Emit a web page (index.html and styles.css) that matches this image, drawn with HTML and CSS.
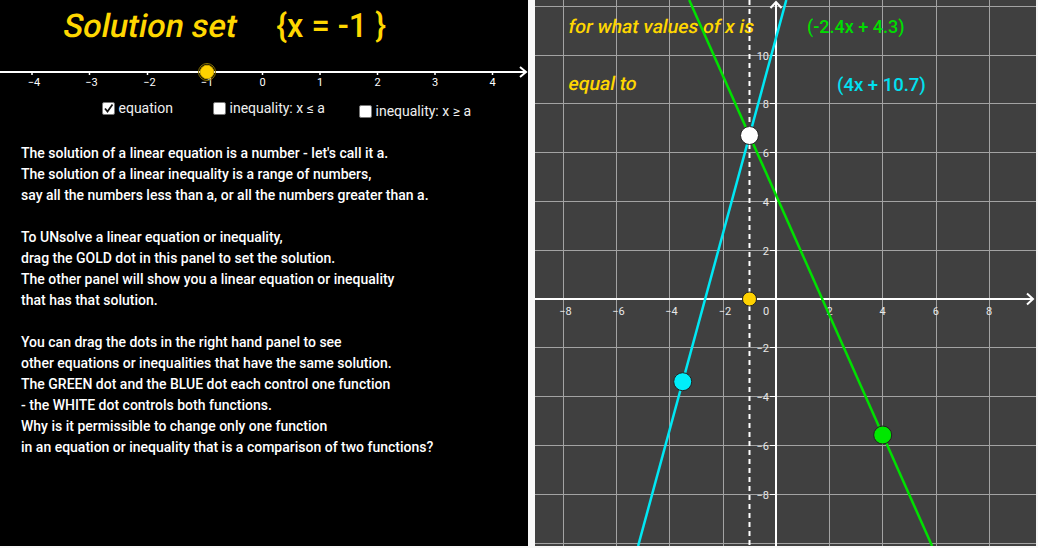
FILE: index.html
```html
<!DOCTYPE html>
<html>
<head>
<meta charset="utf-8">
<link rel="stylesheet" href="styles.css">
</head>
<body>
<div class="app">
  <section class="left">
    <h1 class="title"><span class="title-main">Solution set</span><span class="title-set">{x = -1 }</span></h1>
    <svg class="numline" width="528" height="30" viewBox="0 0 528 30">
      <line x1="0" y1="12" x2="525" y2="12" stroke="#fff" stroke-width="2"/>
      <polyline points="520,7 526,12 520,17" fill="none" stroke="#fff" stroke-width="2"/>
      <g stroke="#fff" stroke-width="1.5">
        <line x1="32" y1="12" x2="32" y2="15"/>
        <line x1="89.5" y1="12" x2="89.5" y2="15"/>
        <line x1="147.5" y1="12" x2="147.5" y2="15"/>
        <line x1="205" y1="12" x2="205" y2="15"/>
        <line x1="262.5" y1="12" x2="262.5" y2="15"/>
        <line x1="320" y1="12" x2="320" y2="15"/>
        <line x1="377.5" y1="12" x2="377.5" y2="15"/>
        <line x1="435" y1="12" x2="435" y2="15"/>
        <line x1="492.5" y1="12" x2="492.5" y2="15"/>
      </g>
      <g class="nl-labels" text-anchor="middle">
        <text x="34" y="26">−4</text>
        <text x="91.5" y="26">−3</text>
        <text x="149.5" y="26">−2</text>
        <text x="207" y="26">−1</text>
        <text x="262.5" y="26">0</text>
        <text x="320" y="26">1</text>
        <text x="377.5" y="26">2</text>
        <text x="435" y="26">3</text>
        <text x="492.5" y="26">4</text>
      </g>
      <circle cx="207" cy="12" r="8.5" fill="none" stroke="#8a7400" stroke-width="1"/>
      <circle cx="207" cy="12" r="6.8" fill="#ffd200" stroke="#c9a400" stroke-width="1"/>
    </svg>
    <div class="checks">
      <label class="check c1"><span class="box"><svg width="11" height="11" viewBox="0 0 11 11"><polyline points="2,5.5 4.5,8.5 9.5,1.5" fill="none" stroke="#111" stroke-width="1.8"/></svg></span><span class="check-text">equation</span></label>
      <label class="check c2"><span class="box"></span><span class="check-text">inequality: x ≤ a</span></label>
      <label class="check c3"><span class="box"></span><span class="check-text">inequality: x ≥ a</span></label>
    </div>
    <div class="explain">
      <p>The solution of a linear equation is a number - let's call it a.<br>The solution of a linear inequality is a range of numbers,<br>say all the numbers less than a, or all the numbers greater than a.</p>
      <p>To UNsolve a linear equation or inequality,<br>drag the GOLD dot in this panel to set the solution.<br>The other panel will show you a linear equation or inequality<br>that has that solution.</p>
      <p>You can drag the dots in the right hand panel to see<br>other equations or inequalities that have the same solution.<br>The GREEN dot and the BLUE dot each control one function<br>- the WHITE dot controls both functions.<br>Why is it permissible to change only one function<br>in an equation or inequality that is a comparison of two functions?</p>
    </div>
  </section>
  <div class="divider"></div>
  <section class="right">
    <svg class="graph" width="501" height="546" viewBox="-1 0 501 546">
      <g stroke="#a3a3a3" stroke-width="1">
        <line x1="27.5" y1="0" x2="27.5" y2="546"/>
        <line x1="80.5" y1="0" x2="80.5" y2="546"/>
        <line x1="133.5" y1="0" x2="133.5" y2="546"/>
        <line x1="187.5" y1="0" x2="187.5" y2="546"/>
        <line x1="293.5" y1="0" x2="293.5" y2="546"/>
        <line x1="346.5" y1="0" x2="346.5" y2="546"/>
        <line x1="400.5" y1="0" x2="400.5" y2="546"/>
        <line x1="453.5" y1="0" x2="453.5" y2="546"/>
        <line x1="-1" y1="6.5" x2="500" y2="6.5"/>
        <line x1="-1" y1="55.5" x2="500" y2="55.5"/>
        <line x1="-1" y1="103.5" x2="500" y2="103.5"/>
        <line x1="-1" y1="152.5" x2="500" y2="152.5"/>
        <line x1="-1" y1="201.5" x2="500" y2="201.5"/>
        <line x1="-1" y1="250.5" x2="500" y2="250.5"/>
        <line x1="-1" y1="347.5" x2="500" y2="347.5"/>
        <line x1="-1" y1="396.5" x2="500" y2="396.5"/>
        <line x1="-1" y1="445.5" x2="500" y2="445.5"/>
        <line x1="-1" y1="494.5" x2="500" y2="494.5"/>
        <line x1="-1" y1="543.5" x2="500" y2="543.5"/>
      </g>
      <text class="q" x="38" y="33" transform="skewX(-11)">for what values of x is</text>
      <text class="q" x="49" y="90" transform="skewX(-11)">equal to</text>
      <text class="f-green" x="271" y="33">(-2.4x + 4.3)</text>
      <text class="f-cyan" x="301" y="91">(4x + 10.7)</text>
      <g stroke="#fff" stroke-width="2" fill="none">
        <line x1="-1" y1="299" x2="497" y2="299"/>
        <polyline points="491,293.5 497,299 491,304.5"/>
        <line x1="240" y1="546" x2="240" y2="2"/>
        <polyline points="234.5,8 240,2 245.5,8"/>
      </g>
      <g stroke="#fff" stroke-width="1">
        <line x1="234" y1="55.5" x2="240" y2="55.5"/>
        <line x1="234" y1="103.5" x2="240" y2="103.5"/>
        <line x1="234" y1="152.5" x2="240" y2="152.5"/>
        <line x1="234" y1="201.5" x2="240" y2="201.5"/>
        <line x1="234" y1="250.5" x2="240" y2="250.5"/>
        <line x1="234" y1="347.5" x2="240" y2="347.5"/>
        <line x1="234" y1="396.5" x2="240" y2="396.5"/>
        <line x1="234" y1="445.5" x2="240" y2="445.5"/>
        <line x1="234" y1="494.5" x2="240" y2="494.5"/>
      </g>
      <g class="ax-labels" text-anchor="end">
        <text x="233" y="59.5">10</text>
        <text x="233" y="107.5">8</text>
        <text x="233" y="156.5">6</text>
        <text x="233" y="205.5">4</text>
        <text x="233" y="254.5">2</text>
        <text x="233" y="351.5">−2</text>
        <text x="233" y="400.5">−4</text>
        <text x="233" y="449.5">−6</text>
        <text x="233" y="498.5">−8</text>
      </g>
      <g class="ax-labels" text-anchor="middle">
        <text x="29.5" y="314.5">−8</text>
        <text x="82.5" y="314.5">−6</text>
        <text x="135.5" y="314.5">−4</text>
        <text x="189" y="314.5">−2</text>
        <text x="230" y="314.5">0</text>
        <text x="293.5" y="314.5">2</text>
        <text x="346.5" y="314.5">4</text>
        <text x="399.8" y="314.5">6</text>
        <text x="453" y="314.5">8</text>
      </g>
      <line x1="213.5" y1="0" x2="213.5" y2="546" stroke="#fff" stroke-width="2" stroke-dasharray="5 4"/>
      <line x1="250.3" y1="0" x2="102.1" y2="546" stroke="#00e8f4" stroke-width="2.5"/>
      <line x1="153.2" y1="0" x2="396.1" y2="546" stroke="#00e000" stroke-width="2.5"/>
      <circle cx="213.5" cy="299" r="7" fill="#ffd200" stroke="#222" stroke-width="1"/>
      <circle cx="213.5" cy="135.5" r="9" fill="#fff" stroke="#222" stroke-width="1"/>
      <circle cx="146.7" cy="381.7" r="9" fill="#00eefa" stroke="#222" stroke-width="1"/>
      <circle cx="346.7" cy="435" r="9" fill="#00e800" stroke="#222" stroke-width="1"/>
    </svg>
  </section>
</div>
</body>
</html>
```
FILE: styles.css
```css
html, body {
  margin: 0;
  padding: 0;
}
body {
  background: #f8f8f8;
  font-family: Roboto, "Liberation Sans", sans-serif;
}
.app {
  display: flex;
  align-items: flex-start;
}
.left {
  width: 528px;
  height: 546px;
  background: #000;
  color: #fff;
  display: flex;
  flex-direction: column;
}
.divider {
  width: 7px;
  height: 548px;
}
.right {
  width: 501px;
  height: 546px;
  background: #404040;
}
.graph {
  display: block;
}
.title {
  margin: 0;
  padding: 6px 0 0 64px;
  height: 40px;
  line-height: 40px;
  font-size: 32.5px;
  color: #ffd700;
  font-weight: 500;
  white-space: nowrap;
  display: flex;
}
.title-main {
  display: inline-block;
  transform: skewX(-11deg);
}
.title-set {
  display: inline-block;
  margin-left: 39px;
}
.numline {
  display: block;
  margin-top: 14px;
}
.nl-labels text {
  font-family: Roboto, "Liberation Sans", sans-serif;
  font-size: 11px;
  fill: #fff;
}
.checks {
  display: flex;
  align-items: flex-start;
  height: 16px;
  margin-top: 10px;
  color: #f0f0f0;
  font-size: 14px;
}
.check {
  display: flex;
  align-items: center;
  gap: 4px;
  height: 16px;
}
.c1 { margin-left: 101.5px; width: 111px; }
.c2 { width: 146px; }
.c3 { margin-top: 3px; }
.box {
  width: 13px;
  height: 13px;
  flex: none;
  box-sizing: border-box;
  background: #fff;
  border: 1px solid #777;
  border-radius: 2px;
  display: flex;
  align-items: center;
  justify-content: center;
}
.check-text {
  line-height: 16px;
  white-space: nowrap;
}
.explain {
  margin-top: 27px;
  padding-left: 21px;
  font-size: 14px;
  font-weight: 500;
  line-height: 21px;
  color: #fff;
}
.explain p {
  margin: 0 0 21px 0;
  white-space: nowrap;
}
.q {
  font-family: Roboto, "Liberation Sans", sans-serif;
  font-weight: 500;
  font-size: 19px;
  fill: #ffd700;
}
.f-green {
  font-family: Roboto, "Liberation Sans", sans-serif;
  font-weight: 500;
  font-size: 18px;
  fill: #00dd00;
}
.f-cyan {
  font-family: Roboto, "Liberation Sans", sans-serif;
  font-weight: 500;
  font-size: 18.5px;
  fill: #00e0f0;
}
.ax-labels text {
  font-family: Roboto, "Liberation Sans", sans-serif;
  font-size: 11px;
  fill: #e8e8e8;
}
```
